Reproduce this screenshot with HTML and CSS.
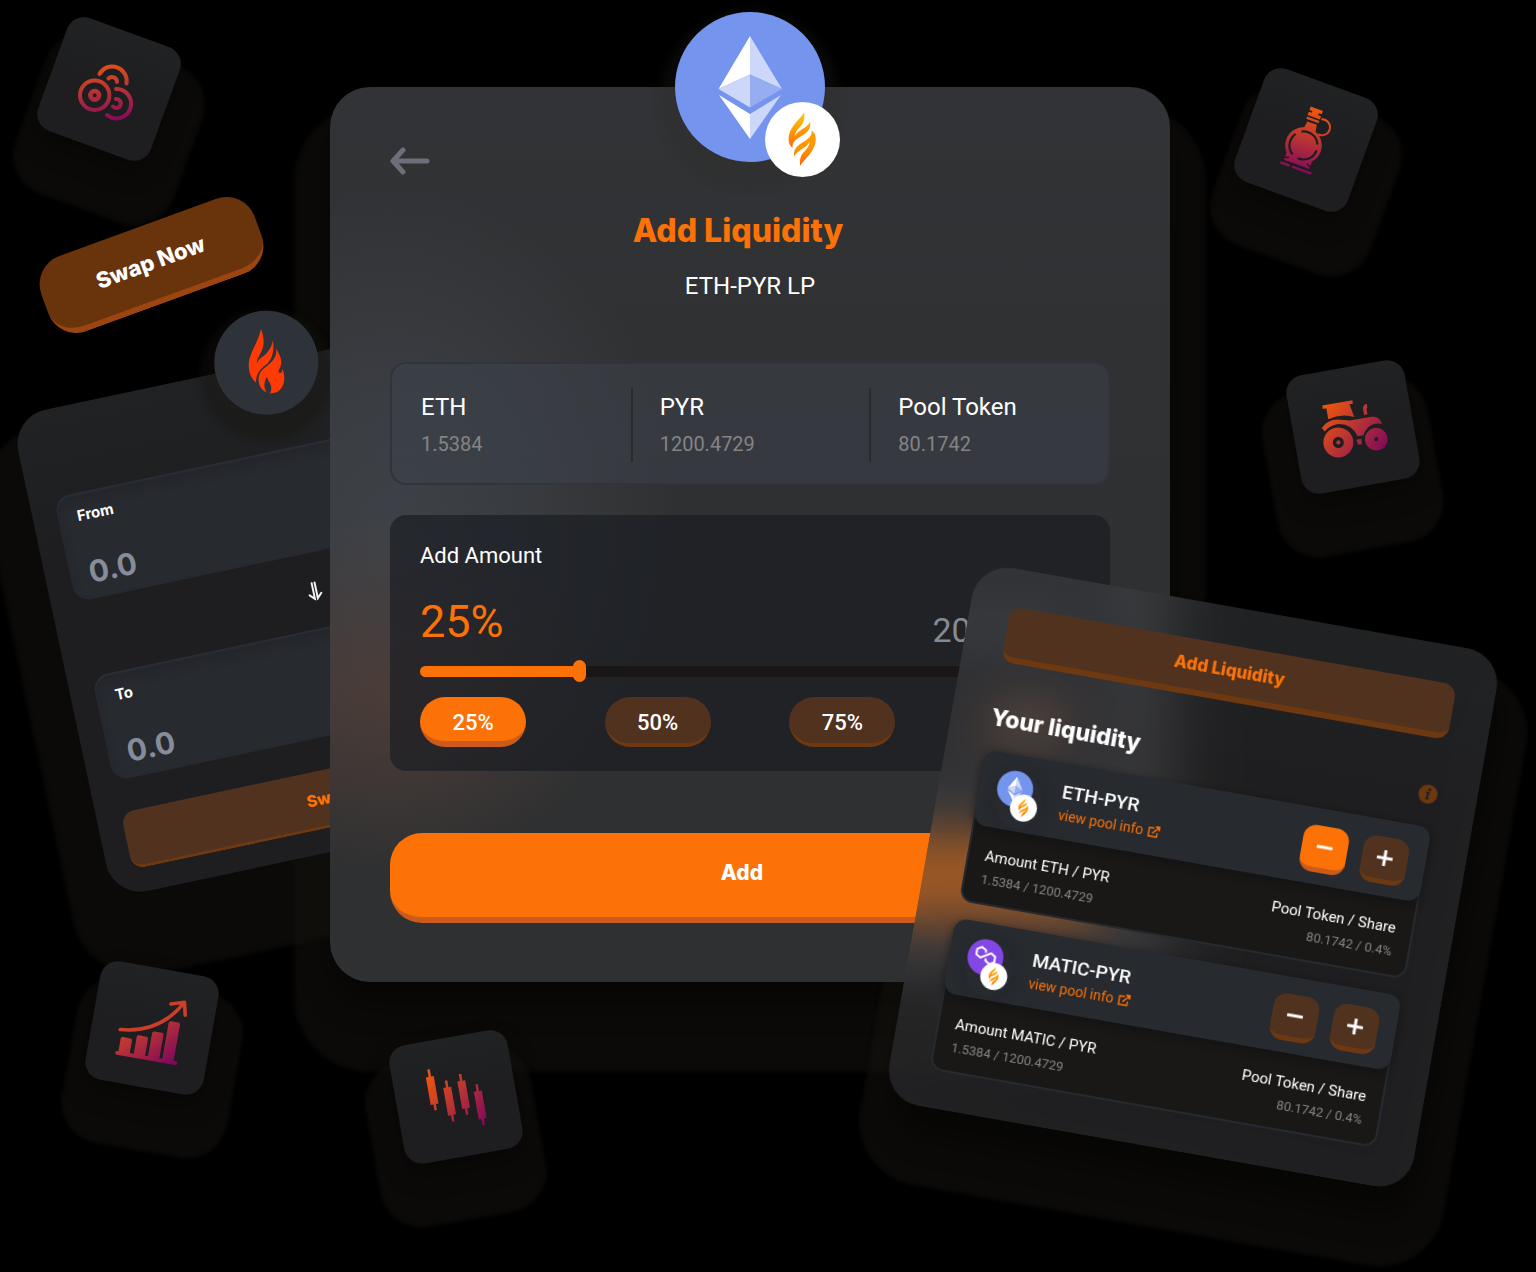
FILE: index.html
```
<!DOCTYPE html>
<html lang="en">
<head>
<meta charset="utf-8">
<meta name="viewport" content="width=device-width, initial-scale=1">
<title>Add Liquidity</title>
<link rel="stylesheet" href="styles.css">
</head>
<body>
<svg class="defs" aria-hidden="true">
  <defs>
    <linearGradient id="ember" gradientUnits="userSpaceOnUse" x1="34" y1="30" x2="88" y2="88">
      <stop offset="0" stop-color="#f4590a"/><stop offset=".5" stop-color="#b93434"/><stop offset="1" stop-color="#80095a"/>
    </linearGradient>
    <linearGradient id="ember-down" gradientUnits="userSpaceOnUse" x1="55" y1="28" x2="62" y2="92">
      <stop offset="0" stop-color="#ef570e"/><stop offset=".5" stop-color="#b93434"/><stop offset="1" stop-color="#86095a"/>
    </linearGradient>
    <linearGradient id="gold" x1="0" y1="0" x2="0" y2="1">
      <stop offset="0" stop-color="#fcc917"/><stop offset=".5" stop-color="#ff9a02"/><stop offset="1" stop-color="#ff6a0c"/>
    </linearGradient>
    <linearGradient id="gold-up" x1="0" y1="1" x2="0" y2="0">
      <stop offset="0" stop-color="#ff9f02"/><stop offset=".5" stop-color="#ff9402"/><stop offset="1" stop-color="#ff6408"/>
    </linearGradient>
    <symbol id="eth" viewBox="0 0 150 150">
      <circle cx="75" cy="75" r="75" fill="#7494ee"/>
      <path fill="#fff" d="M75 24 43.500 77 75 62.500zM44 83l31 19v25z"/>
      <path fill="#cdd7fa" d="M75 24l32 53-32-14.500zM75 62.500 43.500 77 75 95.500zM106 83l-31 19v25z"/>
      <path fill="#97adf2" d="M75 62.500 107 77 75 95.500z"/>
    </symbol>
    <symbol id="matic" viewBox="0 0 36 36">
      <circle cx="18" cy="18" r="18" fill="#8247e5"/>
      <path fill="none" stroke="#fff" stroke-width="2" stroke-linejoin="round" d="M17.500 13.500V11L13 8.300 8.500 11v5.500l4.500 2.700 10-6 4.500 2.700v5.500L23 24.100l-4.500-2.700v-2.500"/>
    </symbol>
    <symbol id="pyr" viewBox="376 308 226 226">
      <circle cx="489" cy="421" r="113" fill="#fff"/>
      <path fill="url(#gold)" d="M494 340C480 362 447 385 447 420C447 432 451 440 459 446C458 428 470 420 487 410C505 400 515 388 512 367C506 382 490 388 478 397C472 402 468 407 465 413C466 400 474 390 484 380C494 370 496 355 494 340Z"/>
      <path fill="url(#gold-up)" transform="rotate(180 488 420)" d="M494 340C480 362 447 385 447 420C447 432 451 440 459 446C458 428 470 420 487 410C505 400 515 388 512 367C506 382 490 388 478 397C472 402 468 407 465 413C466 400 474 390 484 380C494 370 496 355 494 340Z"/>
    </symbol>
    <symbol id="external" viewBox="0 0 12 12">
      <path fill="none" stroke="currentColor" stroke-width="1.400" d="M6 2.500H1v8.500h8.500V7M4.500 8 11 1M7.500 1H11v3.500"/>
      <path fill="currentColor" d="M7 .500h4.500V5z"/>
    </symbol>
  </defs>
</svg>

<main class="stage">
  <div class="halo halo-panel"></div>
  <div class="halo halo-pools"></div>

  <div class="tile tile-coins">
    <svg viewBox="0 0 120 120" aria-hidden="true">
      <g transform="rotate(-20 60 60)" fill="none" stroke="url(#ember-down)" stroke-width="4" stroke-linecap="round">
        <circle cx="45.700" cy="66.300" r="14.700"/>
        <circle cx="45.700" cy="66.300" r="4.300" stroke-width="4.600"/>
        <path d="M50.500 45A14.500 14.500 0 0 1 77.500 54.500"/>
        <path d="M59.500 49.500A5 5 0 0 1 68 53"/>
        <path d="M67 60A14.700 14.700 0 1 1 58 86"/>
        <path d="M67 70A4.500 4.500 0 1 1 64 77.500"/>
      </g>
    </svg>
  </div>
  <div class="tile tile-flask">
    <svg viewBox="0 0 120 120" aria-hidden="true">
      <g fill="url(#ember-down)">
        <path d="M53 27h13v3.500h-3v2h3V36H53v-3.500h3v-2h-3zM53 37.500h13V40H53zM55 42h10l1.500 9q1 2 4 3H49q4-1 4.500-3z"/>
        <circle cx="59.500" cy="66" r="18.300"/>
        <path d="M46 78h27v8H46zM43.500 88.500h10v2.500h-10zM56 88.500h20.500V91H56z"/>
      </g>
      <path fill="none" stroke="url(#ember-down)" stroke-width="2" stroke-linecap="round" d="M68 35a8 8 0 1 1 2 15.500"/>
      <circle cx="59.500" cy="66" r="14" fill="none" stroke="#1e1e20" stroke-width="2.200" stroke-dasharray="23 6.300"/>
      <path fill="none" stroke="#1e1e20" stroke-width="1.500" d="M45 84l5-2M74 84l-5-2M55 87h14"/>
    </svg>
  </div>
  <div class="tile tile-tractor">
    <svg viewBox="0 0 120 120" aria-hidden="true">
      <g fill="url(#ember)">
        <path d="M33.500 33.500H64V37h-3.500l2.500 13.500q-12-6-26-2.500V37h-3.500z"/>
        <path d="M77.500 39.500v4q-1 0-1 2V50H73v-5q0-5 4.500-5.500z"/>
        <path d="M29 55.500Q36 48.500 46 50L58 53h22q8 1 9 9-8-3-14 1-5 4-6 7h-6Q59 56 45 54.500q-8 0-13.500 5z"/>
        <path d="M61 73h5v5.500h-4z"/>
        <circle cx="42.900" cy="72.700" r="15"/>
        <circle cx="80.800" cy="76" r="11.300"/>
      </g>
      <circle cx="42.900" cy="72.700" r="3.800" fill="none" stroke="#1e1e20" stroke-width="3.400"/>
      <circle cx="80.800" cy="76" r="2" fill="#1e1e20"/>
    </svg>
  </div>
  <div class="tile tile-chart">
    <svg viewBox="0 0 120 120" aria-hidden="true">
      <path fill="url(#ember)" d="M28 90.500q0-2 3-2V76q0-2 2-2h7.500q2 0 2 2v12.500h4V71.500q0-2 2-2H56q2 0 2 2v17h3V65q0-2 2-2h7.500q2 0 2 2v23.500h3V52q0-2 2-2H85q2 0 2 2v36.500q4 0 4 2t-2 2H30q-2 0-2-2z"/>
      <path fill="none" stroke="#cb3f2a" stroke-width="3.600" stroke-linecap="round" stroke-linejoin="round" d="M29 67Q68 64 87 30M74.500 33 87.500 29l3 12.500"/>
    </svg>
  </div>

  <section class="window swap" aria-label="Swap">
    <div class="swap-logo">
      <svg viewBox="640 31 314 314" aria-hidden="true"><g fill="#ff3b05">
        <path d="M781 86C772 130 744 160 744 195C744 220 752 235 766 248C766 225 775 210 795 195C815 180 822 150 817 121C812 145 800 160 785 170C777 176 772 182 768 190C768 170 790 155 789 125C789 110 785 98 781 86Z"/>
        <path d="M827 146C830 170 815 185 800 197C780 210 770 225 775 250C778 265 788 273 798 277C788 262 790 245 799 230C803 245 812 250 812 265C812 272 810 277 808 280C830 283 850 265 851 240C852 225 850 215 845 206C846 214 843 219 838 219C834 219 832 214 836 208C848 190 842 170 827 146Z"/>
      </g></svg>
    </div>
    <label class="field">From<input type="text" placeholder="0.0"></label>
    <button class="flip" aria-label="Flip direction">
      <svg viewBox="0 0 20 20" aria-hidden="true"><path d="M8.500 2v16L4 13.500M11.500 2v16l4.500-4.500"/></svg>
    </button>
    <label class="field">To<input type="text" placeholder="0.0"></label>
    <button class="wide">Switch Now</button>
  </section>

  <button class="swap-now">Swap Now</button>

  <section class="panel">
    <div class="pair pair-large">
      <svg class="coin"><use href="#eth"/></svg>
      <svg class="badge"><use href="#pyr"/></svg>
    </div>
    <button class="back" aria-label="Back">
      <svg viewBox="0 0 40 28" aria-hidden="true"><path d="M13 3 3 14l10 11M3 14h34"/></svg>
    </button>
    <h1>Add Liquidity</h1>
    <p class="subtitle">ETH-PYR LP</p>
    <dl class="balances">
      <div><dt>ETH</dt><dd>1.5384</dd></div>
      <div><dt>PYR</dt><dd>1200.4729</dd></div>
      <div><dt>Pool Token</dt><dd>80.1742</dd></div>
    </dl>
    <div class="amount">
      <label for="share">Add Amount</label>
      <div class="readout"><output for="share">25%</output><span>20.0435</span></div>
      <input id="share" type="range" min="0" max="100" value="25">
      <div class="pills">
        <button class="active">25%</button>
        <button>50%</button>
        <button>75%</button>
        <button>100%</button>
      </div>
    </div>
    <button class="add">Add</button>
  </section>

  <div class="tile tile-candles">
    <svg viewBox="0 0 120 120" aria-hidden="true">
      <path fill="url(#ember)" d="M36.500 28H39v7.500h2.700v28H39v6h-2.500v-6h-2.800v-28h2.800zM51.800 42h2.500v7H57v28h-2.700v6.500h-2.500V77H49V49h2.800zM66.700 38h2.500v7H72v28h-2.800v6.500h-2.500V73H64V45h2.700zM81.200 51h2.500v7h2.800v28h-2.800v6.500h-2.500V86h-2.700V58h2.700z"/>
    </svg>
  </div>

  <section class="window pools">
    <button class="wide">Add Liquidity</button>
    <header>
      <h2>Your liquidity</h2>
      <svg class="info" viewBox="0 0 20 20" aria-hidden="true"><circle cx="10" cy="10" r="10" fill="#6e380f"/><circle cx="11" cy="5" r="1.600" fill="#1e1e20"/><path d="M7.500 8.500h3L9 14.500h2" fill="none" stroke="#1e1e20" stroke-width="2"/></svg>
    </header>
    <article class="pool">
      <div class="pool-head">
        <div class="pair">
          <svg class="coin"><use href="#eth"/></svg>
          <svg class="badge"><use href="#pyr"/></svg>
        </div>
        <div class="pool-name">
          <h3>ETH-PYR</h3>
          <a href="#eth-pyr">view pool info <svg><use href="#external"/></svg></a>
        </div>
        <button class="step active" aria-label="Remove"><svg viewBox="0 0 16 16"><path d="M1 8h14"/></svg></button>
        <button class="step" aria-label="Add"><svg viewBox="0 0 16 16"><path d="M1 8h14M8 1v14"/></svg></button>
      </div>
      <dl class="pool-body">
        <div><dt>Amount ETH / PYR</dt><dd>1.5384 / 1200.4729</dd></div>
        <div><dt>Pool Token / Share</dt><dd>80.1742 / 0.4%</dd></div>
      </dl>
    </article>
    <article class="pool">
      <div class="pool-head">
        <div class="pair">
          <svg class="coin"><use href="#matic"/></svg>
          <svg class="badge"><use href="#pyr"/></svg>
        </div>
        <div class="pool-name">
          <h3>MATIC-PYR</h3>
          <a href="#matic-pyr">view pool info <svg><use href="#external"/></svg></a>
        </div>
        <button class="step" aria-label="Remove"><svg viewBox="0 0 16 16"><path d="M1 8h14"/></svg></button>
        <button class="step" aria-label="Add"><svg viewBox="0 0 16 16"><path d="M1 8h14M8 1v14"/></svg></button>
      </div>
      <dl class="pool-body">
        <div><dt>Amount MATIC / PYR</dt><dd>1.5384 / 1200.4729</dd></div>
        <div><dt>Pool Token / Share</dt><dd>80.1742 / 0.4%</dd></div>
      </dl>
    </article>
  </section>
</main>
</body>
</html>
```
FILE: styles.css
```
* { box-sizing: border-box; }
:root {
  --orange: #fc7207;
  --orange-edge: #cc5a1a;
  --brown: #50321e;
  --brown-edge: #6e3810;
  --glow: rgba(22, 20, 16, .5);
}
body { margin: 0; background: #000; color: #fff; font-family: Roboto, "Noto Sans", sans-serif; }
h1, h2, h3, p, dl, dd { margin: 0; }
button { border: 0; padding: 0; background: none; color: inherit; font: inherit; cursor: pointer; }
svg { display: block; }
.defs { position: absolute; width: 0; height: 0; }

.stage {
  position: relative;
  display: grid;
  grid-template-columns: 330fr 840fr 366fr;
  align-items: start;
  min-height: 100vh;
  padding: 87px 0 290px;
  overflow: hidden;
  background: #000;
}

/* Floating icon tiles */
.tile {
  position: absolute;
  width: 120px;
  height: 120px;
  border-radius: 18px;
  background: linear-gradient(#202224, #1e1e20 50%);
  transform: rotate(var(--turn));
  box-shadow: 0 12px 24px rgba(0, 0, 0, .3), var(--drop) 4px 24px var(--glow);
}
.tile-coins { left: 3.2%; top: 29px; --turn: 20deg; --drop: 14px 38px; }
.tile-flask { left: 81.1%; top: 80px; --turn: 20deg; --drop: 14px 38px; }
.tile-tractor { left: 84.2%; top: 367px; --turn: -10deg; --drop: -7px 39px; }
.tile-chart { left: 6%; top: 968px; --turn: 10deg; --drop: 7px 39px; z-index: 1; }
.tile-candles { left: 25.8%; top: 1037px; --turn: -10deg; --drop: -7px 39px; z-index: 3; }

.swap-now {
  position: absolute;
  left: 2.5%;
  top: 225px;
  width: 227px;
  height: 80px;
  border-radius: 30px;
  border-bottom: 6px solid #9c4510;
  background: #69330b;
  font: 800 22px Inter, sans-serif;
  transform: rotate(-20deg);
}

/* Rotated windows */
.window { position: absolute; transform-origin: 0 0; }
.wide {
  display: block;
  width: 100%;
  height: 56px;
  border-radius: 13px;
  border-bottom: 6px solid var(--brown-edge);
  background: var(--brown);
  color: var(--orange);
  font: 800 17px Inter, sans-serif;
}

.swap {
  left: .7%;
  top: 417px;
  width: 34%;
  padding: 88px 25px 24px;
  border-radius: 35px;
  background: linear-gradient(#202224, #1e1e20 30%);
  transform: rotate(-12deg);
  box-shadow: -10px 49px 4px 34px var(--glow);
}
.swap-logo {
  position: absolute;
  left: 50%;
  top: -52px;
  width: 104px;
  height: 104px;
  margin-left: -52px;
  border-radius: 50%;
  background: #2e3339;
  transform: rotate(12deg);
  box-shadow: 0 12px 6px 14px rgba(22, 20, 16, .4);
}
.field {
  display: block;
  height: 107px;
  padding: 13px 19px;
  border-radius: 16px;
  background: #272a2f;
  box-shadow: inset 0 2px 2px #2b2f37, inset 0 8px 8px #24262b;
  font: 700 15px/20px Inter, sans-serif;
}
.field input {
  display: block;
  width: 100%;
  height: 40px;
  margin-top: 27px;
  padding: 0;
  border: 0;
  background: none;
  color: #868c99;
  font: 700 30px/40px Inter, sans-serif;
}
.field input::placeholder { color: #868c99; opacity: 1; }
.flip { display: grid; place-items: center; width: 100%; height: 76px; }
.flip svg { width: 20px; height: 20px; fill: none; stroke: #f0f0f0; stroke-width: 2; stroke-linecap: round; }
.swap .wide { height: 58px; margin-top: 32px; padding-right: 10px; border-bottom-width: 3px; font-size: 16px; }

.panel {
  position: relative;
  z-index: 2;
  grid-column: 2;
  padding: 52px 60px 59px;
  border-radius: 40px;
  background:
    radial-gradient(220px 180px at 60px 610px, rgba(130, 66, 36, .26), transparent),
    radial-gradient(290px 340px at 60px 440px, rgba(84, 92, 106, .4), rgba(84, 92, 106, .25) 45%, transparent),
    linear-gradient(#323336, #2f3031 50%);
  text-align: center;
}
.pair { position: relative; width: 43px; height: 49px; flex: none; }
.pair .coin { position: relative; width: 36px; height: 36px; }
.pair .badge { position: absolute; right: 0; bottom: 0; width: 27px; height: 27px; }
.pair::before {
  content: "";
  position: absolute;
  inset: 2px -4px -8px 0;
  border-radius: 50%;
  box-shadow: 0 0 10px 4px rgba(30, 31, 35, .25);
}
.pair-large { position: absolute; left: 50%; top: -75px; width: 165px; height: 165px; margin-left: -75px; }
.pair-large .coin { width: 150px; height: 150px; }
.pair-large .badge { width: 75px; height: 75px; }
.pair-large::before { inset: 0 15px 15px 0; box-shadow: 0 12px 10px 14px rgba(42, 40, 38, .24); }
.back { display: block; height: 44px; }
.back svg { width: 40px; height: 28px; fill: none; stroke: #6d6e78; stroke-width: 5; stroke-linecap: round; stroke-linejoin: round; }
h1 { margin-top: 28px; padding-right: 24px; color: var(--orange); font: 800 32px/40px Inter, sans-serif; }
.subtitle { margin-top: 20px; font-size: 24px; line-height: 30px; }

.balances {
  display: grid;
  grid-template-columns: repeat(3, 1fr);
  margin-top: 61px;
  padding: 24px 0 21px;
  border: 2px solid #30353b;
  border-radius: 16px;
  background: rgba(60, 66, 74, .55);
  text-align: left;
}
.balances > div { padding-left: 27px; border-left: 2px solid #282b30; }
.balances > div:first-child { border-color: transparent; }
.balances dt { font-size: 24px; line-height: 38px; }
.balances dd { color: #848484; font-size: 20px; line-height: 36px; }

.amount {
  margin-top: 30px;
  padding: 26px 30px 24px;
  border-radius: 16px;
  background: rgba(24, 28, 33, .66);
  text-align: left;
}
.amount label { display: block; font-size: 22px; line-height: 30px; }
.readout { display: flex; justify-content: space-between; align-items: flex-end; margin-top: 23px; }
.readout output { color: var(--orange); font-size: 45px; line-height: 56px; }
.readout span { color: #858b94; font-size: 34px; line-height: 40px; padding-right: 24px; }
input[type="range"] {
  appearance: none;
  display: block;
  width: calc(100% - 35px);
  height: 22px;
  margin: 10px 0 0;
  background: none;
}
input[type="range"]::-webkit-slider-runnable-track {
  height: 11px;
  border-radius: 6px;
  background: linear-gradient(to right, var(--orange) 25%, #191715 25%);
}
input[type="range"]::-webkit-slider-thumb {
  appearance: none;
  width: 13px;
  height: 22px;
  margin-top: -6px;
  border-radius: 7px;
  background: var(--orange);
}
.pills { display: flex; justify-content: space-between; margin-top: 15px; }
.pills button {
  width: 106px;
  height: 50px;
  padding-top: 4px;
  border-radius: 25px;
  border-bottom: 4px solid var(--brown-edge);
  background: var(--brown);
  font-size: 22px;
  font-weight: 500;
}
.pills .active { padding-top: 6px; border-bottom: 6px solid var(--orange-edge); background: var(--orange); }
.add {
  display: block;
  width: 100%;
  height: 90px;
  margin-top: 62px;
  padding: 0 16px 6px 0;
  border-radius: 32px;
  border-bottom: 6px solid var(--orange-edge);
  background: var(--orange);
  font: 800 21px Inter, sans-serif;
}

/* Halos of the large windows, underneath everything else */
.halo { position: absolute; }
.halo-panel {
  left: calc(100% * 330 / 1536);
  top: 87px;
  bottom: 290px;
  width: calc(100% * 840 / 1536);
  border-radius: 40px;
  box-shadow: 0 22px 30px rgba(0, 0, 0, .4), 0 54px 4px 36px var(--glow);
}
.pools, .halo-pools { left: 63.7%; top: 562px; width: 34.7%; border-radius: 36px; transform: rotate(10deg); }
.halo-pools {
  height: 546px;
  transform-origin: 0 0;
  box-shadow: 9px 28px 30px rgba(0, 0, 0, .4), 9px 49px 4px 30px var(--glow);
}

.pools {
  z-index: 4;
  padding: 38px 40px;
  background: linear-gradient(rgba(64, 67, 71, .5), rgba(60, 60, 64, .5) 30%);
  backdrop-filter: blur(24px);
}
.pools header { display: flex; align-items: center; justify-content: space-between; height: 40px; margin: 36px 0 13px; }
.info { width: 19px; height: 19px; }
h2 { font: 800 23px/40px Inter, sans-serif; }
.pool + .pool { margin-top: 17px; }
.pool-head {
  position: relative;
  display: flex;
  align-items: center;
  gap: 15px;
  height: 76px;
  padding: 4px 18px 0;
  border-radius: 13px;
  background: #272a2f;
  box-shadow: 0 3px 8px rgba(16, 17, 19, .7);
}
.pool-name { flex: 1; padding-left: 7px; }
.pool-name h3 { font-size: 19px; font-weight: 500; line-height: 24px; }
.pool-name a { display: flex; align-items: center; gap: 5px; color: var(--orange); font-size: 14px; line-height: 22px; text-decoration: none; }
.pool-name a svg { width: 12px; height: 12px; }
.step {
  display: grid;
  place-items: center;
  width: 46px;
  height: 47px;
  border-radius: 13px;
  border-bottom: 5px solid var(--brown-edge);
  background: var(--brown);
}
.step.active { border-color: var(--orange-edge); background: var(--orange); }
.step svg { width: 16px; height: 16px; fill: none; stroke: #fff; stroke-width: 3; stroke-linecap: round; }
.pool-body {
  display: flex;
  justify-content: space-between;
  margin-top: -10px;
  padding: 25px 16px 11px;
  border: 2px solid #262a2f;
  border-radius: 0 0 13px 13px;
  background: #191816;
}
.pool-body > div:last-child { text-align: right; }
.pool-body dt { font-size: 15px; line-height: 24px; }
.pool-body dd { color: #858585; font-size: 13px; line-height: 24px; }
```
